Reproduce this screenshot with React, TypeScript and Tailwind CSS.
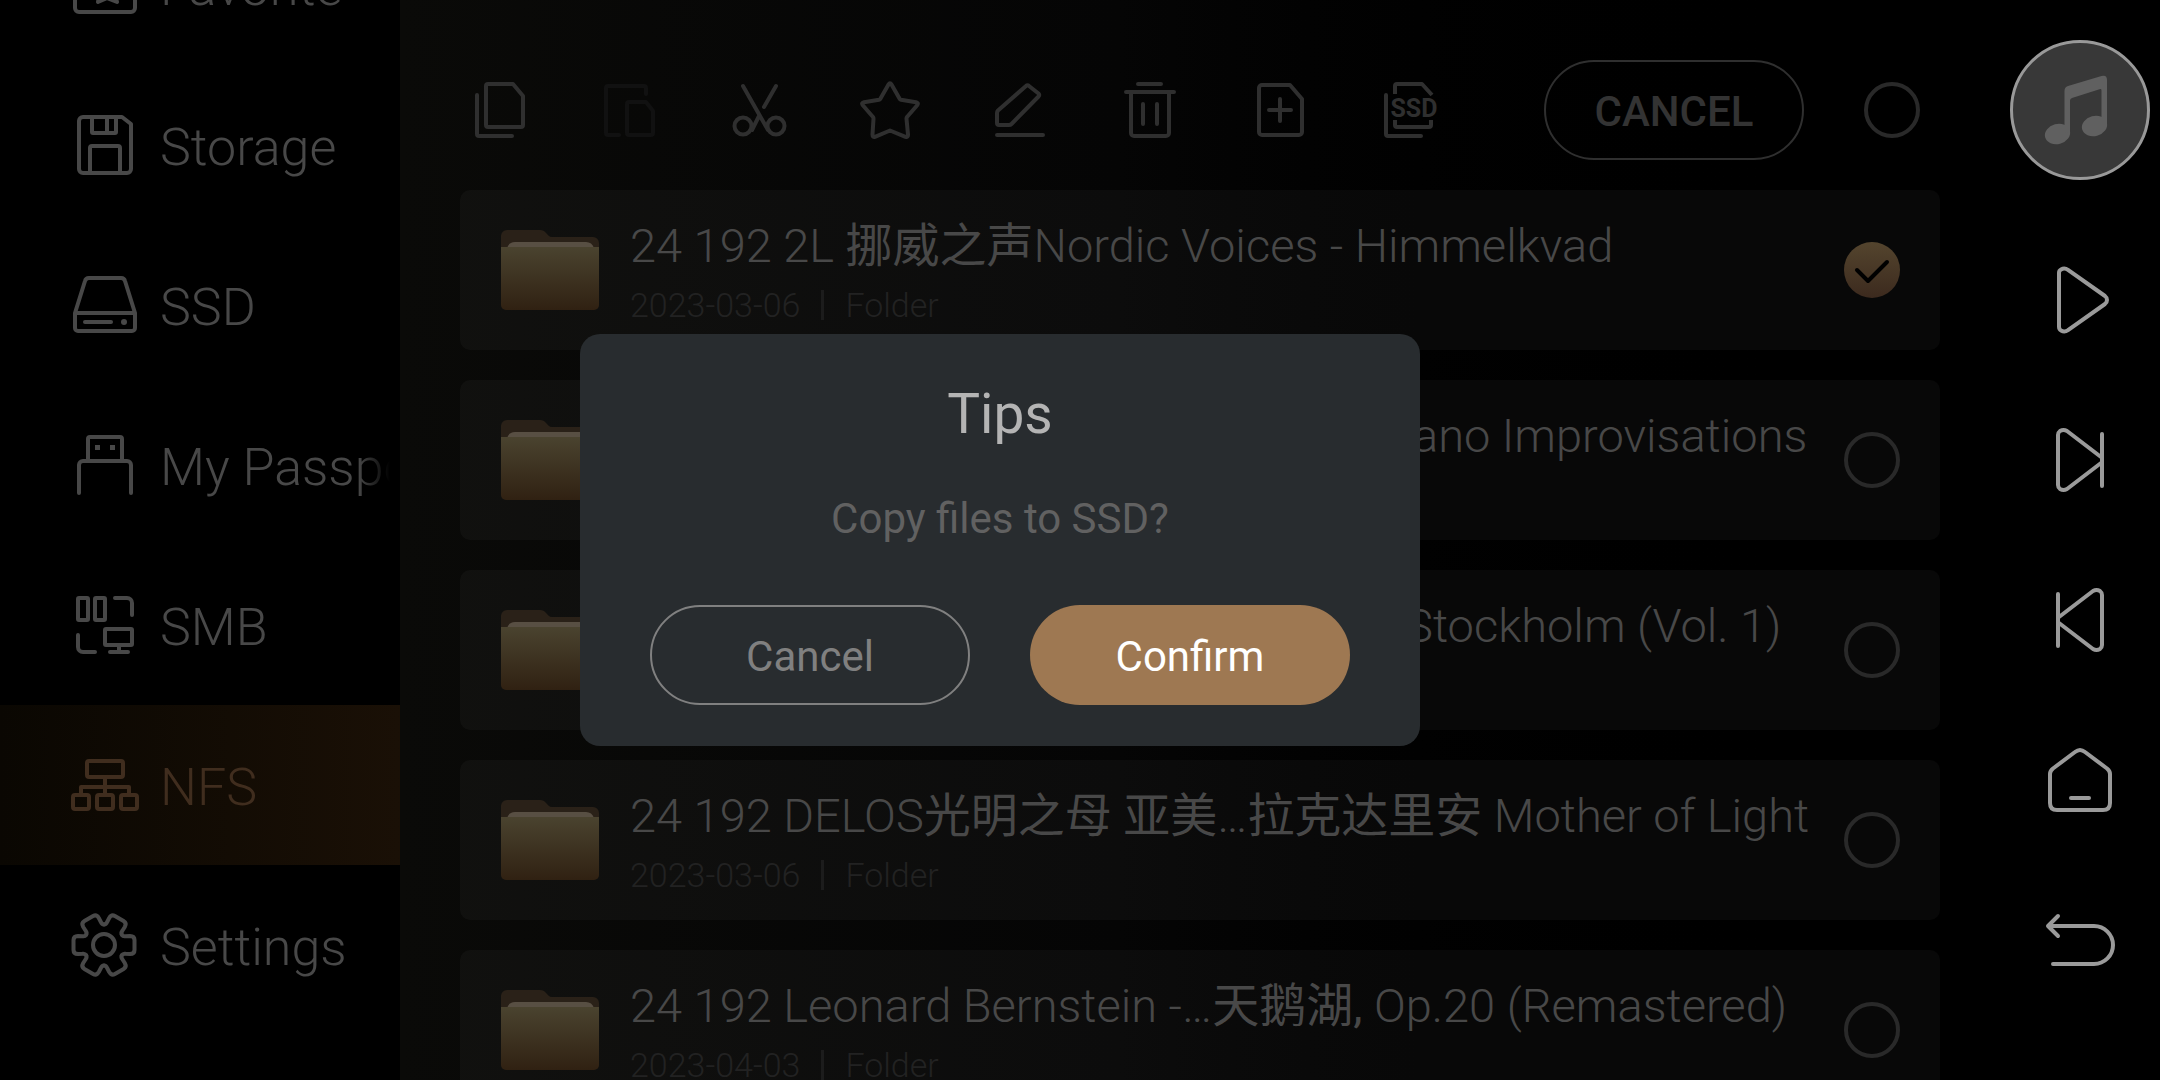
import React, { useState } from 'react';

type IconProps = { className?: string };

const stroke = {
  fill: 'none',
  stroke: 'currentColor',
  strokeWidth: 4,
  strokeLinecap: 'round',
  strokeLinejoin: 'round',
} as const;

/* Sidebar icons */

const NavSvg: React.FC<{ children: React.ReactNode }> = ({ children }) => (
  <svg viewBox="0 0 64 64" className="w-16 h-16 shrink-0 overflow-visible" aria-hidden="true" {...stroke}>
    {children}
  </svg>
);

const FavoriteIcon = () => (
  <NavSvg>
    <rect x="2" y="5" width="60" height="54" rx="4" />
    <path d="M34 20l4 9 10 1-7 7 3 12-10-4-9 4 2-12-7-7 10-1z" fill="currentColor" />
  </NavSvg>
);

const StorageIcon = () => (
  <NavSvg>
    <path d="M10 4H49L58 11V56a4 4 0 0 1-4 4H10a4 4 0 0 1-4-4V8a4 4 0 0 1 4-4z" />
    <path d="M19 5V19a1 1 0 0 0 1 1H42a1 1 0 0 0 1-1V5M34 5V19" />
    <path d="M17 59V35a2 2 0 0 1 2-2H45a2 2 0 0 1 2 2V59" />
  </NavSvg>
);

const DriveIcon = () => (
  <NavSvg>
    <path d="M2 40L12 8a4 4 0 0 1 4-3H48a4 4 0 0 1 4 3L62 40V55a3 3 0 0 1-3 3H5a3 3 0 0 1-3-3V40H62" />
    <path d="M12 49H38" />
    <circle cx="51" cy="49" r="3" fill="currentColor" stroke="none" />
  </NavSvg>
);

const UsbIcon = () => (
  <NavSvg>
    <path d="M15 28V6a2 2 0 0 1 2-2H47a2 2 0 0 1 2 2V28" />
    <path d="M6 60V32a4 4 0 0 1 4-4H54a4 4 0 0 1 4 4V60" />
    <path d="M22 12h5v5h-5zM37 12h5v5h-5z" fill="currentColor" stroke="none" />
  </NavSvg>
);

const SmbIcon = () => (
  <NavSvg>
    <rect x="5" y="5" width="10" height="22" rx="1" />
    <rect x="22" y="5" width="10" height="22" rx="1" />
    <path d="M42 5H54a5 5 0 0 1 5 5V22M5 42V54a5 5 0 0 0 5 5H22" />
    <rect x="32" y="36" width="27" height="16" rx="1" />
    <path d="M37 59H55M46 53V58" />
  </NavSvg>
);

const NfsIcon = () => (
  <NavSvg>
    <rect x="14" y="8" width="36" height="16" rx="2" />
    <path d="M32 25V41M8 41V34H56V41" />
    <rect x="0" y="42" width="16" height="14" rx="2" />
    <rect x="24" y="42" width="16" height="14" rx="2" />
    <rect x="48" y="42" width="16" height="14" rx="2" />
  </NavSvg>
);

const GearIcon = () => (
  <NavSvg>
    <g transform="translate(31 32)">
      {[0, 60, 120, 180, 240, 300].map(angle => (
        <path
          key={angle}
          transform={`rotate(${angle})`}
          d="M17.8 -10.3Q19 -8.4 21.5 -8.8L26 -9Q30.5 -9 30.5 -5V5Q30.5 9 26 9L21.5 8.8Q19 8.4 17.8 10.3"
        />
      ))}
      <circle r="11" />
    </g>
  </NavSvg>
);

/* Toolbar icons */

const ToolSvg: React.FC<{ children: React.ReactNode }> = ({ children }) => (
  <svg viewBox="0 0 60 60" className="w-[60px] h-[60px]" aria-hidden="true" {...stroke}>
    {children}
  </svg>
);

const CopyIcon = () => (
  <ToolSvg>
    <path d="M18 4H43L53 16V45a2 2 0 0 1-2 2H18a2 2 0 0 1-2-2V6a2 2 0 0 1 2-2z" />
    <path d="M7 15V54a2 2 0 0 0 2 2H42" />
  </ToolSvg>
);

const PasteIcon = () => (
  <ToolSvg>
    <path d="M46 14V8a2 2 0 0 0-2-2H8a2 2 0 0 0-2 2V53a2 2 0 0 0 2 2H19" />
    <path d="M29 22H46L53 31V53a2 2 0 0 1-2 2H29a2 2 0 0 1-2-2V24a2 2 0 0 1 2-2z" />
  </ToolSvg>
);

const CutIcon = () => (
  <ToolSvg>
    <path d="M13 6L30 36L38 50M46 6L34 27M29 36L22 50" />
    <circle cx="13" cy="46" r="8.5" />
    <circle cx="46" cy="46" r="8.5" />
  </ToolSvg>
);

const StarIcon = () => (
  <ToolSvg>
    <path d="M28.5 4.5Q30 1.800 31.500 4.500L39.500 18.500Q40 19.500 41 19.700L56 22.200Q59 23 57.200 25.200L47 37Q46.500 37.700 46.500 38.700L48 54.500Q48.200 57.500 45.500 56.800L30 50.500L15 56.800Q12.500 57.500 12.500 54.500L13.500 38.700Q13.500 37.700 13 37L2.800 25.200Q1 23 4 22.200L19 19.700Q20 19.500 20.500 18.500Z" />
  </ToolSvg>
);

const EditIcon = () => (
  <ToolSvg>
    <path d="M36 6Q37.500 4.500 39 6L48.500 13.500Q50 15 48.500 16.500L21.500 44Q20.500 45 19 45H9Q7 45 7 43V33Q7 31.500 8 30.500Z" />
    <path d="M7 55H53" />
  </ToolSvg>
);

const TrashIcon = () => (
  <ToolSvg>
    <path d="M18 4H41M6 12H54M11 13V53a3 3 0 0 0 3 3H46a3 3 0 0 0 3-3V13M23 24V44M37 24V44" />
  </ToolSvg>
);

const NewFileIcon = () => (
  <ToolSvg>
    <path d="M12 5H40L52 19V52a3 3 0 0 1-3 3H12a3 3 0 0 1-3-3V8a3 3 0 0 1 3-3z" />
    <path d="M30 19V41M19 30H41" />
  </ToolSvg>
);

const CopySsdIcon = () => (
  <ToolSvg>
    <path d="M15 14V6a2 2 0 0 1 2-2H42L52 15M15 40V45a2 2 0 0 0 2 2H49a2 2 0 0 0 2-2V40" strokeLinecap="butt" />
    <path d="M6 15V54a2 2 0 0 0 2 2H41" />
    <text x="34" y="37" textAnchor="middle" fill="currentColor" stroke="none" className="font-[Roboto] text-[25px] font-bold">
      SSD
    </text>
  </ToolSvg>
);

const FolderIcon: React.FC<IconProps> = ({ className }) => (
  <svg viewBox="-1 0 100 80" className={className} aria-hidden="true">
    <defs>
      <linearGradient id="folder-front" x1="0" y1="0" x2="0" y2="1">
        <stop offset="0" stopColor="#4a432f" />
        <stop offset="1" stopColor="#302112" />
      </linearGradient>
    </defs>
    <path d="M0 30V6a6 6 0 0 1 6-6H39q4 0 6 3l3 3q1 1 3 1H92a6 6 0 0 1 6 6V30z" fill="#2a2118" />
    <path d="M6 18Q8 12 14 12H85Q91 12 93 18z" fill="#584f43" />
    <path d="M0 17H98V75a5 5 0 0 1-5 5H5a5 5 0 0 1-5-5z" fill="url(#folder-front)" />
  </svg>
);

/* Player rail icons */

const RailSvg: React.FC<{ children: React.ReactNode }> = ({ children }) => (
  <svg viewBox="0 0 80 80" className="w-20 h-20" aria-hidden="true" {...stroke}>
    {children}
  </svg>
);

const PlayIcon = () => (
  <RailSvg>
    <path d="M19 13Q19 10.500 21 9.500Q24.500 7.500 28 9.800L65 36Q67 37.500 67 40Q67 42.500 65 44L28 70.200Q24.500 72.500 21 70.500Q19 69.500 19 66.500Z" />
  </RailSvg>
);

const NextIcon = () => (
  <RailSvg>
    <path d="M61 37L27 11Q23.500 9 20 11Q18 12.500 18 15V65Q18 67.500 20 69Q23.500 71 27 69L61 43M62 14V66" />
  </RailSvg>
);

const PrevIcon = () => (
  <RailSvg>
    <path d="M19 37L53 11Q56.500 9 60 11Q62 12.500 62 15V65Q62 67.500 60 69Q56.500 71 53 69L19 43M18 14V66" />
  </RailSvg>
);

const HomeIcon = () => (
  <RailSvg>
    <path d="M35 12Q40 8 45 12L67 28.500Q70 31 70 34V63Q70 70 63 70H17Q10 70 10 63V34Q10 31 13 28.500Z" />
    <path d="M31 58H49" />
  </RailSvg>
);

const BackIcon = () => (
  <RailSvg>
    <path d="M18 16L8 26L18 36M9 26H54a19 19 0 0 1 0 38H13" />
  </RailSvg>
);

const MusicIcon = () => (
  <svg viewBox="3 3 134 134" className="w-full h-full" fill="#606060" aria-hidden="true">
    <ellipse cx="47.500" cy="94" rx="12.800" ry="10" transform="rotate(-15 47.500 94)" />
    <ellipse cx="84.500" cy="86" rx="12.800" ry="10" transform="rotate(-15 84.500 86)" />
    <path d="M54.500 92V51Q54.500 47 58 46L91.500 36Q97 34.500 97 40V86H91.500V50.500Q91.500 48.500 89.500 49.200L62 58Q60 58.700 60 60.500V93z" />
  </svg>
);

const navItems = [
  { label: 'Favorite', Icon: FavoriteIcon },
  { label: 'Storage', Icon: StorageIcon },
  { label: 'SSD', Icon: DriveIcon },
  { label: 'My Passport', Icon: UsbIcon },
  { label: 'SMB', Icon: SmbIcon },
  { label: 'NFS', Icon: NfsIcon },
  { label: 'Settings', Icon: GearIcon },
];

const tools = [
  { label: 'Copy', Icon: CopyIcon },
  { label: 'Paste', Icon: PasteIcon, disabled: true },
  { label: 'Cut', Icon: CutIcon },
  { label: 'Favorite', Icon: StarIcon },
  { label: 'Rename', Icon: EditIcon },
  { label: 'Delete', Icon: TrashIcon },
  { label: 'New folder', Icon: NewFileIcon },
  { label: 'Copy to SSD', Icon: CopySsdIcon },
];

const folders = [
  { title: '24 192 2L 挪威之声Nordic Voices - Himmelkvad', date: '2023-03-06' },
  { title: '24 192 2L 钢琴即兴曲…Kleiberg: My Piano Improvisations', date: '2023-03-06' },
  { title: '24 192 DG 斯德哥尔摩音乐会…Live in Stockholm (Vol. 1)', date: '2023-03-06' },
  { title: '24 192 DELOS光明之母 亚美…拉克达里安 Mother of Light', date: '2023-03-06' },
  { title: '24 192 Leonard Bernstein -…天鹅湖, Op.20 (Remastered)', date: '2023-04-03' },
];

const railItems = [
  { label: 'Play', Icon: PlayIcon },
  { label: 'Next', Icon: NextIcon },
  { label: 'Previous', Icon: PrevIcon },
  { label: 'Home', Icon: HomeIcon },
  { label: 'Back', Icon: BackIcon },
];

// Chinese runs are set in the regular weight, Latin ones stay light
const MixedText: React.FC<{ text: string }> = ({ text }) => (
  <>
    {text.split(/([\u4e00-\u9fff]+,?)/).map((part, i) =>
      i % 2 ? <span key={i} className="font-normal">{part}</span> : part
    )}
  </>
);

const RoundCheckbox: React.FC<{ label: string; checked: boolean; onChange: () => void }> = ({ label, checked, onChange }) => (
  <span className="grid shrink-0 w-14 h-14">
    <input
      type="checkbox"
      aria-label={label}
      checked={checked}
      onChange={onChange}
      className="col-start-1 row-start-1 appearance-none w-14 h-14 rounded-full border-4 border-[#292929] checked:border-0 checked:bg-linear-to-b checked:from-[#54452e] checked:to-[#3c2a1e]"
    />
    {checked && (
      <svg viewBox="0 0 56 56" className="col-start-1 row-start-1 w-14 h-14 pointer-events-none text-black" aria-hidden="true" {...stroke}>
        <path d="M13 28L24 39L43 20" />
      </svg>
    )}
  </span>
);

const Sidebar: React.FC = () => {
  const [active, setActive] = useState('NFS');

  return (
    <nav className="w-[400px] shrink-0 h-full flex flex-col justify-end pb-[55px] overflow-hidden bg-black">
      {navItems.map(({ label, Icon }) => (
        <button
          key={label}
          onClick={() => setActive(label)}
          className={`h-40 shrink-0 flex items-center gap-[23px] pl-[73px] pr-[10px] text-left text-[52px] leading-[60px] ${
            active === label ? 'text-[#402d1e] bg-linear-to-r from-[#0a0702] to-[#1a1006]' : 'text-[#484848]'
          }`}
        >
          <Icon />
          <span className="flex-1 pt-[6px] overflow-hidden whitespace-nowrap mask-r-from-[calc(100%-32px)] mask-r-to-100%">{label}</span>
        </button>
      ))}
    </nav>
  );
};

const Toolbar: React.FC<{ allChecked: boolean; onToggleAll: () => void }> = ({ allChecked, onToggleAll }) => (
  <div className="flex items-center pl-[10px] pr-5 pt-[60px] pb-[30px]">
    <div className="flex items-center gap-[70px]">
      {tools.map(({ label, Icon, disabled }) => (
        <button key={label} aria-label={label} disabled={disabled} className="text-[#2f2f2f] disabled:text-[#111111]">
          <Icon />
        </button>
      ))}
    </div>
    <button className="ml-auto mr-[60px] w-[260px] h-[100px] pt-[3px] rounded-full border-2 border-[#2f2f2f] text-[#333333] text-[42px] font-medium">
      CANCEL
    </button>
    <RoundCheckbox label="Select all" checked={allChecked} onChange={onToggleAll} />
  </div>
);

const ConfirmDialog: React.FC<{ onClose: () => void }> = ({ onClose }) => (
  <div className="absolute inset-0 flex items-center justify-center">
    <div role="dialog" aria-labelledby="dialog-title" className="w-[840px] rounded-[20px] bg-[#282c2f] pt-12 pb-[41px] px-[70px] text-center font-normal">
      <h2 id="dialog-title" className="text-[55px] leading-[64px] text-[#b4b4b4]">Tips</h2>
      <p className="mt-12 text-[42px] leading-[50px] text-[#616161]">Copy files to SSD?</p>
      <div className="mt-[61px] grid grid-cols-2 gap-[60px] text-[42px]">
        <button onClick={onClose} className="h-[100px] pt-[3px] rounded-full border-2 border-[#808080] text-[#808080]">
          Cancel
        </button>
        <button onClick={onClose} className="h-[100px] pt-[3px] rounded-full bg-[#9e7852] text-white">
          Confirm
        </button>
      </div>
    </div>
  </div>
);

export default function App() {
  const [selected, setSelected] = useState<number[]>([0]);
  const [dialogOpen, setDialogOpen] = useState(true);

  const toggle = (index: number) =>
    setSelected(prev => (prev.includes(index) ? prev.filter(i => i !== index) : [...prev, index]));

  const allChecked = selected.length === folders.length;

  return (
    <div className="h-screen flex overflow-hidden bg-black font-light font-[Roboto,'Noto_Sans_CJK_SC',sans-serif]">
      <div className="relative flex-1 min-w-0 flex">
        <Sidebar />

        <main className="flex-1 min-w-0 px-[60px] overflow-hidden bg-linear-to-r from-[#0a0a08] via-[#050505] via-45% to-black to-90%">
          <Toolbar allChecked={allChecked} onToggleAll={() => setSelected(allChecked ? [] : folders.map((_, i) => i))} />
          <ul className="flex flex-col gap-[30px]">
            {folders.map((folder, index) => (
              <li key={folder.title} className="h-40 shrink-0 flex items-center px-10 rounded-[10px] bg-white/3">
                <FolderIcon className="w-[100px] h-20 shrink-0" />
                <div className="ml-[30px] pt-1 flex-1 min-w-0">
                  <p className="text-[47px] leading-[56px] text-[#484848] whitespace-nowrap overflow-hidden">
                    <MixedText text={folder.title} />
                  </p>
                  <p className="mt-[10px] flex items-center text-[34px] leading-[42px] text-[#222222]">
                    {folder.date}
                    <span className="mx-[21px] w-[3px] h-[30px] bg-[#1c1c1c]" />
                    Folder
                  </p>
                </div>
                <RoundCheckbox label={folder.title} checked={selected.includes(index)} onChange={() => toggle(index)} />
              </li>
            ))}
          </ul>
        </main>

        {dialogOpen && <ConfirmDialog onClose={() => setDialogOpen(false)} />}
      </div>

      <aside className="w-40 shrink-0 flex flex-col items-center gap-20 pt-10 text-[#9a9a9a]">
        <button aria-label="Now playing" className="w-[140px] h-[140px] shrink-0 rounded-full border-[3px] border-[#999999] bg-[#383838]">
          <MusicIcon />
        </button>
        {railItems.map(({ label, Icon }) => (
          <button key={label} aria-label={label}>
            <Icon />
          </button>
        ))}
      </aside>
    </div>
  );
}
